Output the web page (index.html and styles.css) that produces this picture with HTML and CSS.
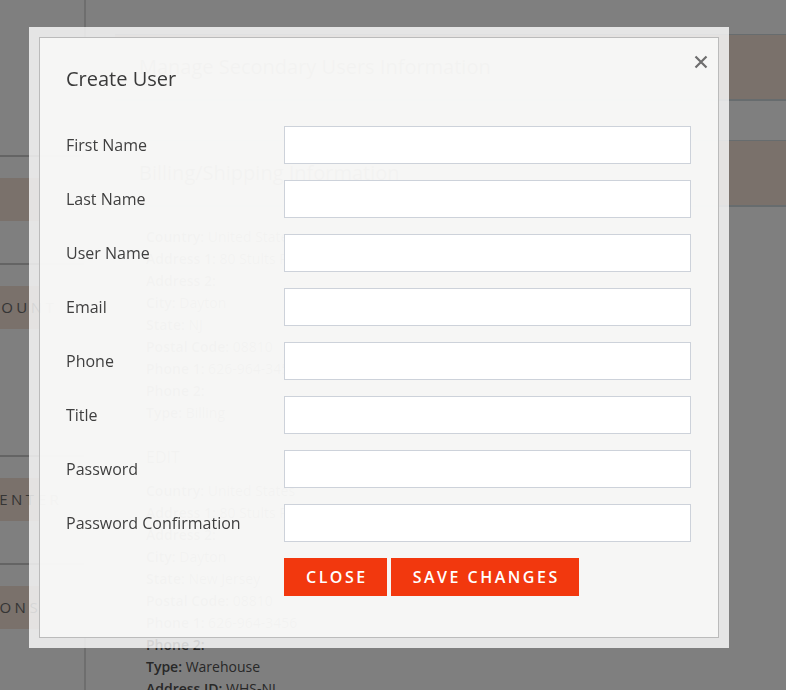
FILE: index.html
```html
<!DOCTYPE html>
<html lang="en">
<head>
<meta charset="utf-8">
<title>Create User</title>
<link rel="stylesheet" href="styles.css">
</head>
<body>
<div class="page">
  <aside class="sidebar">
    <div class="nav-section"><div class="nav-item nav-home">HOME</div></div>
    <div class="nav-section nav-section-tall"><div class="nav-item nav-account">MY ACCOUNT</div></div>
    <div class="nav-section"><div class="nav-item nav-center">SUPPORT CENTER</div></div>
    <div class="nav-section"><div class="nav-item nav-options">MY OPTIONS</div></div>
  </aside>
  <main class="main">
    <div class="panel-heading">Manage Secondary Users Information</div>
    <div class="panel-heading panel-heading-second">Billing/Shipping Information</div>
    <div class="address">
      <p><b>Country:</b> United States</p>
      <p><b>Address 1:</b> 80 Stults Road</p>
      <p><b>Address 2:</b></p>
      <p><b>City:</b> Dayton</p>
      <p><b>State:</b> NJ</p>
      <p><b>Postal Code:</b> 08810</p>
      <p><b>Phone 1:</b> 626-964-3456</p>
      <p><b>Phone 2:</b></p>
      <p><b>Type:</b> Billing</p>
      <p class="edit">EDIT</p>
      <p><b>Country:</b> United States</p>
      <p><b>Address 1:</b> 80 Stults Road</p>
      <p><b>Address 2:</b></p>
      <p><b>City:</b> Dayton</p>
      <p><b>State:</b> New Jersey</p>
      <p><b>Postal Code:</b> 08810</p>
      <p><b>Phone 1:</b> 626-964-3456</p>
      <p><b>Phone 2:</b></p>
      <p><b>Type:</b> Warehouse</p>
      <p><b>Address ID:</b> WHS-NJ</p>
    </div>
  </main>
</div>
<div class="overlay"></div>
<div class="modal">
  <div class="modal-content">
    <div class="modal-header">
      <h4 class="modal-title">Create User</h4>
      <button class="close" type="button" aria-label="Close">
        <svg width="14" height="14" viewBox="0 0 14 14"><path d="M1.5 1.5 L12.5 12.5 M12.5 1.5 L1.5 12.5" stroke="#6e6e6e" stroke-width="2.2" fill="none"/></svg>
      </button>
    </div>
    <form class="form">
      <label class="form-label">First Name</label><input class="form-input" type="text">
      <label class="form-label">Last Name</label><input class="form-input" type="text">
      <label class="form-label">User Name</label><input class="form-input" type="text">
      <label class="form-label">Email</label><input class="form-input" type="text">
      <label class="form-label">Phone</label><input class="form-input" type="text">
      <label class="form-label">Title</label><input class="form-input" type="text">
      <label class="form-label">Password</label><input class="form-input" type="password">
      <label class="form-label">Password Confirmation</label><input class="form-input" type="password">
      <div class="actions">
        <button class="btn" type="button">Close</button>
        <button class="btn" type="button">Save Changes</button>
      </div>
    </form>
  </div>
</div>
</body>
</html>
```
FILE: styles.css
```css
html, body {
  margin: 0;
  padding: 0;
  height: 100%;
  overflow: hidden;
}
body {
  background: #ffffff;
  font-family: "Open Sans", "Liberation Sans", sans-serif;
  color: #505050;
}
.page {
  display: flex;
  min-height: 100%;
}
.sidebar {
  flex: none;
  width: 202px;
  margin-left: -118px;
  border-right: 2px solid #dcdcdc;
  padding-top: 155px;
}
.nav-section {
  border-top: 2px solid #c8c8c8;
  padding: 21px 0 42px;
}
.nav-section-tall {
  padding-bottom: 126px;
}
.nav-item {
  height: 43px;
  line-height: 43px;
  background: #f4e2d6;
  font-size: 15px;
  letter-spacing: 3.5px;
  color: #6a6a6a;
  white-space: nowrap;
  overflow: hidden;
}
.nav-home { padding-left: 20px; }
.nav-account { padding-left: 44px; }
.nav-center { padding-left: 6px; }
.nav-options { padding-left: 34px; }
.main {
  flex: 1;
  padding: 34px 0 0 29px;
}
.panel-heading {
  height: 64px;
  line-height: 64px;
  padding-left: 24px;
  background: #f4e2d6;
  border-top: 1px solid #cfd8dc;
  border-bottom: 2px solid #cfd8dc;
  font-size: 20px;
  color: #555;
}
.panel-heading-second {
  margin-top: 39px;
}
.address {
  margin-top: 19px;
  padding-left: 31px;
  font-size: 14px;
}
.address p {
  margin: 0;
  line-height: 22px;
}
.address b {
  font-weight: 600;
}
.address .edit {
  margin: 22px 0 12px;
  font-size: 16px;
}
.overlay {
  position: fixed;
  inset: 0;
  background: rgba(0, 0, 0, 0.5);
}
.modal {
  position: absolute;
  left: 29px;
  top: 27px;
  width: 700px;
  box-sizing: border-box;
  border: 10px solid rgba(255, 255, 255, 0.8);
}
.modal-content {
  background: rgba(252, 252, 251, 0.955);
  border: 1px solid #bbbbbb;
  padding: 0 27px 41px 26px;
}
.modal-header {
  position: relative;
  padding-top: 27px;
}
.modal-title {
  margin: 0;
  font-size: 20px;
  line-height: 28px;
  font-weight: 400;
  color: #3a3a3a;
}
.close {
  position: absolute;
  top: 17px;
  right: -17px;
  width: 14px;
  height: 14px;
  padding: 0;
  border: 0;
  background: transparent;
  display: flex;
}
.form {
  margin-top: 33px;
  display: grid;
  grid-template-columns: 218px 407px;
  row-gap: 16px;
  align-items: center;
}
.form-label {
  font-size: 16px;
  line-height: 22px;
  color: #3f3f3f;
}
.form-input {
  box-sizing: border-box;
  height: 38px;
  width: 407px;
  margin: 0;
  border: 1px solid #cdd2da;
  background: #ffffff;
  font: inherit;
}
.actions {
  grid-column: 2;
  display: flex;
  gap: 4px;
}
.btn {
  height: 38px;
  padding: 0 19px 0 22px;
  border: 0;
  background: #f2380e;
  color: #ffffff;
  font-family: "Open Sans", "Liberation Sans", sans-serif;
  font-size: 16px;
  font-weight: 600;
  letter-spacing: 2.5px;
  text-transform: uppercase;
}
```
